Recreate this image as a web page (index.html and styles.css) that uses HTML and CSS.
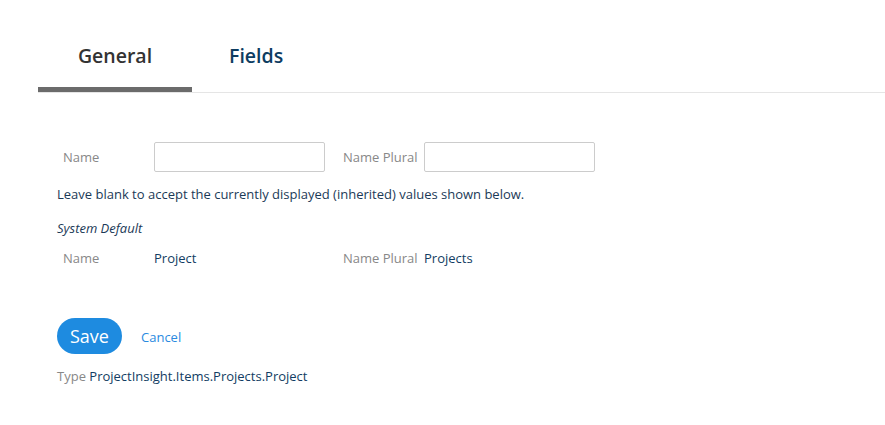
FILE: index.html
```html
<!DOCTYPE html>
<html>
<head>
<meta charset="utf-8">
<link rel="stylesheet" href="styles.css">
</head>
<body>
<div class="page">
  <div class="tabs">
    <div class="tab active">General</div>
    <div class="tab">Fields</div>
  </div>
  <div class="content">
    <div class="row form-row">
      <label class="label">Name</label>
      <input class="input" type="text">
      <label class="label label2">Name Plural</label>
      <input class="input" type="text">
    </div>
    <p class="hint">Leave blank to accept the currently displayed (inherited) values shown below.</p>
    <p class="section">System Default</p>
    <div class="row value-row">
      <span class="label">Name</span>
      <span class="value">Project</span>
      <span class="label label2">Name Plural</span>
      <span class="value">Projects</span>
    </div>
    <div class="actions">
      <button class="save">Save</button>
      <a class="cancel">Cancel</a>
    </div>
    <div class="type"><span class="type-label">Type</span> ProjectInsight.Items.Projects.Project</div>
  </div>
</div>
</body>
</html>
```
FILE: styles.css
```css
* { box-sizing: border-box; }
body {
  margin: 0;
  font-family: "Open Sans", sans-serif;
  background: #fff;
  color: #1b3a57;
}
.page { padding: 30px 0 0 38px; }
.tabs {
  display: flex;
  border-bottom: 1px solid #e5e5e5;
  height: 63px;
}
.tab {
  padding: 12px 37px 0;
  font-size: 19.5px;
  font-weight: 600;
  color: #0d3c61;
}
.tab.active {
  width: 154px;
  padding: 12px 0 0;
  text-align: center;
  color: #333;
  border-bottom: 5px solid #6b6b6b;
}
.content { padding: 49px 0 0 19px; font-size: 13px; }
.row { display: flex; align-items: center; }
.label { color: #888; width: 97px; padding-left: 6px; }
.label2 { width: 81px; padding-left: 0; margin-left: 18px; }
.input {
  width: 171px;
  height: 30px;
  border: 1px solid #ccc;
  border-radius: 2px;
  margin: 0;
}
.hint { margin: 13px 0 0; line-height: 18px; }
.section { margin: 16px 0 0; font-style: italic; line-height: 18px; }
.value-row { margin-top: 12px; line-height: 18px; }
.value { width: 171px; color: #123d63; }
.actions { display: flex; align-items: center; margin-top: 51px; }
.save {
  width: 65px; height: 36px;
  border: none; border-radius: 18px;
  background: #1e8be0;
  color: #fff;
  font-family: "Open Sans", sans-serif;
  font-size: 18px;
  font-weight: 500;
  padding: 0;
}
.cancel { color: #2a8adf; margin-left: 19px; padding-top: 2px; }
.type { margin-top: 13px; color: #123d63; }
.type-label { color: #888; }
```
